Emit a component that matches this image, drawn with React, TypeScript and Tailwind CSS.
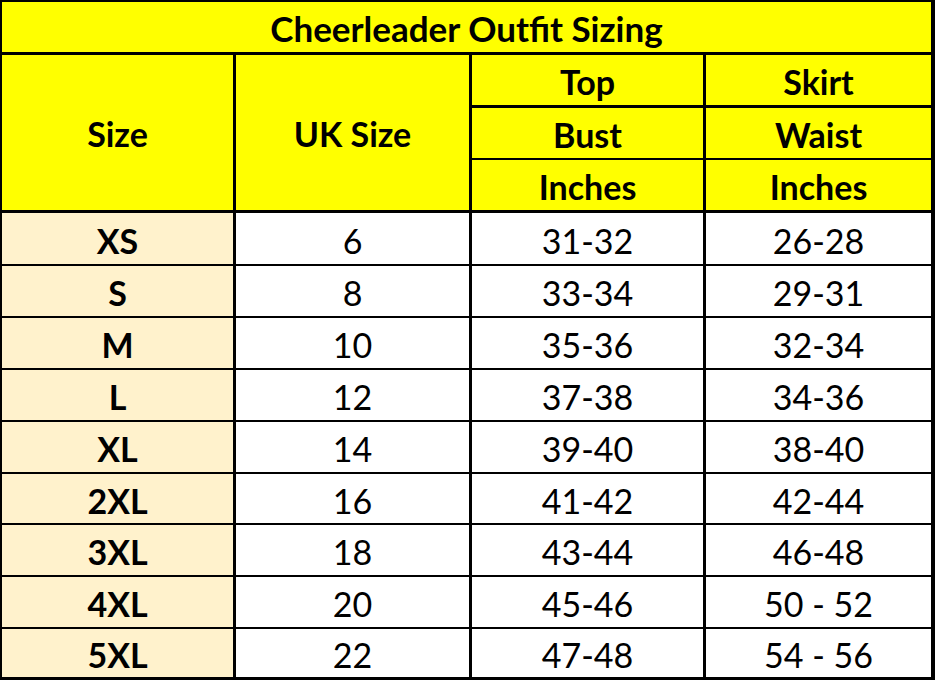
import React from "react";

const rows: [string, string, string, string][] = [
  ["XS", "6", "31-32", "26-28"],
  ["S", "8", "33-34", "29-31"],
  ["M", "10", "35-36", "32-34"],
  ["L", "12", "37-38", "34-36"],
  ["XL", "14", "39-40", "38-40"],
  ["2XL", "16", "41-42", "42-44"],
  ["3XL", "18", "43-44", "46-48"],
  ["4XL", "20", "45-46", "50 - 52"],
  ["5XL", "22", "47-48", "54 - 56"],
];

export default function App() {
  const font = { fontFamily: "Lato, 'Open Sans', sans-serif" };
  return (
    <div className="w-[937px] h-[683px] bg-white" style={font}>
      <div className="w-[935px] border-l-2 border-t-2 border-black">
        <div className="grid grid-cols-[234px_236px_234px_229px] grid-rows-[53px_53px_52px_53px_53px_52px_52px_52px_52px_51px_52px_52px_51px] text-black text-[34px] leading-none">
          <div className="col-span-4 bg-[#ffff00] border-r-4 border-b-[3px] border-black flex items-center justify-center font-bold pt-[3px] text-[35px]">
            Cheerleader Outfit Sizing
          </div>
          <div className="row-span-3 bg-[#ffff00] border-r-[3px] border-b-[3px] border-black flex items-center justify-center font-bold pt-[2px]">
            Size
          </div>
          <div className="row-span-3 bg-[#ffff00] border-r-[3px] border-b-[3px] border-black flex items-center justify-center font-bold pt-[2px]">
            UK Size
          </div>
          <div className="bg-[#ffff00] border-r-[3px] border-b-[3px] border-black flex items-center justify-center font-bold pt-[4px]">
            Top
          </div>
          <div className="bg-[#ffff00] border-r-4 border-b-[3px] border-black flex items-center justify-center font-bold pt-[4px]">
            Skirt
          </div>
          <div className="bg-[#ffff00] border-r-[3px] border-b-2 border-black flex items-center justify-center font-bold pt-[4px]">
            Bust
          </div>
          <div className="bg-[#ffff00] border-r-4 border-b-2 border-black flex items-center justify-center font-bold pt-[4px]">
            Waist
          </div>
          <div className="bg-[#ffff00] border-r-[3px] border-b-[3px] border-black flex items-center justify-center font-bold pt-[4px]">
            Inches
          </div>
          <div className="bg-[#ffff00] border-r-4 border-b-[3px] border-black flex items-center justify-center font-bold pt-[4px]">
            Inches
          </div>
          {rows.map((r, i) => {
            const last = i === rows.length - 1;
            const b = last ? "border-b-[3px]" : "border-b-2";
            return (
              <React.Fragment key={r[0]}>
                <div className={`bg-[#fff2cc] border-r-[3px] ${b} border-black flex items-center justify-center font-bold pt-[4px]`}>
                  {r[0]}
                </div>
                <div className={`bg-white border-r-[3px] ${b} border-black flex items-center justify-center pt-[4px]`}>
                  {r[1]}
                </div>
                <div className={`bg-white border-r-[3px] ${b} border-black flex items-center justify-center pt-[4px]`}>
                  {r[2]}
                </div>
                <div className={`bg-white border-r-4 ${b} border-black flex items-center justify-center pt-[4px]`}>
                  {r[3]}
                </div>
              </React.Fragment>
            );
          })}
        </div>
      </div>
    </div>
  );
}
